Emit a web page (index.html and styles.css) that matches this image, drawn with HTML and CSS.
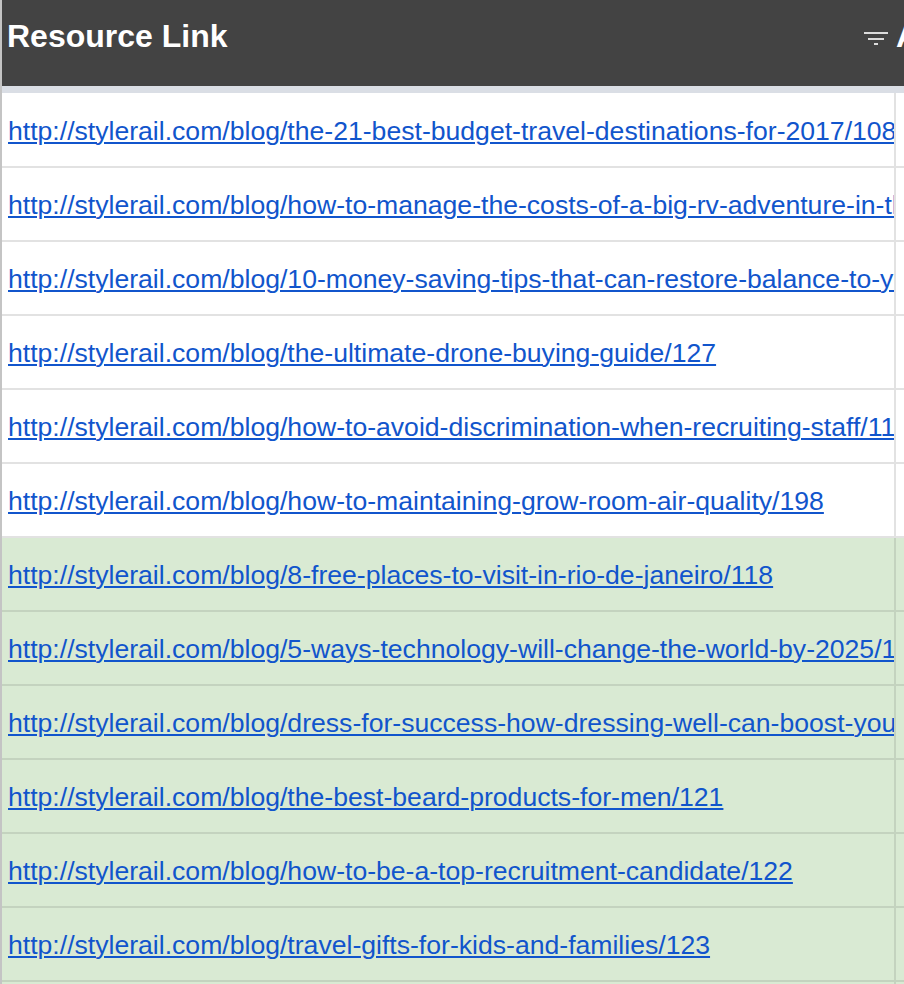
FILE: index.html
```html
<!DOCTYPE html>
<html lang="en">
<head>
  <meta charset="UTF-8">
  <title>Resource Links</title>
  <meta name="viewport" content="width=device-width, initial-scale=1.0">
  <link rel="stylesheet" href="styles.css">
</head>
<body>

  <div class="sheet">
    <div class="head">
      <div class="head-cell first">
        <span class="title">Resource Link</span>
        <svg class="filter" width="24" height="13" viewBox="0 0 24 13">
          <rect x="0" y="0" width="24" height="2" fill="#dcdcdc"/>
          <rect x="4" y="6" width="16" height="2" fill="#dcdcdc"/>
          <rect x="10" y="11" width="4" height="2" fill="#dcdcdc"/>
        </svg>
      </div>
      <div class="head-cell">
        <span class="title">Anchor Text</span>
      </div>
    </div>

    <div class="freeze"></div>

    <div class="row">
      <div class="cell first"><a href="#">http://stylerail.com/blog/the-21-best-budget-travel-destinations-for-2017/108</a></div>
      <div class="cell"></div>
    </div>
    <div class="row">
      <div class="cell first"><a href="#">http://stylerail.com/blog/how-to-manage-the-costs-of-a-big-rv-adventure-in-the-usa/109</a></div>
      <div class="cell"></div>
    </div>
    <div class="row">
      <div class="cell first"><a href="#">http://stylerail.com/blog/10-money-saving-tips-that-can-restore-balance-to-your-finances/110</a></div>
      <div class="cell"></div>
    </div>
    <div class="row">
      <div class="cell first"><a href="#">http://stylerail.com/blog/the-ultimate-drone-buying-guide/127</a></div>
      <div class="cell"></div>
    </div>
    <div class="row">
      <div class="cell first"><a href="#">http://stylerail.com/blog/how-to-avoid-discrimination-when-recruiting-staff/117</a></div>
      <div class="cell"></div>
    </div>
    <div class="row">
      <div class="cell first"><a href="#">http://stylerail.com/blog/how-to-maintaining-grow-room-air-quality/198</a></div>
      <div class="cell"></div>
    </div>
    <div class="row green">
      <div class="cell first"><a href="#">http://stylerail.com/blog/8-free-places-to-visit-in-rio-de-janeiro/118</a></div>
      <div class="cell"></div>
    </div>
    <div class="row green">
      <div class="cell first"><a href="#">http://stylerail.com/blog/5-ways-technology-will-change-the-world-by-2025/119</a></div>
      <div class="cell"></div>
    </div>
    <div class="row green">
      <div class="cell first"><a href="#">http://stylerail.com/blog/dress-for-success-how-dressing-well-can-boost-your-career/120</a></div>
      <div class="cell"></div>
    </div>
    <div class="row green">
      <div class="cell first"><a href="#">http://stylerail.com/blog/the-best-beard-products-for-men/121</a></div>
      <div class="cell"></div>
    </div>
    <div class="row green">
      <div class="cell first"><a href="#">http://stylerail.com/blog/how-to-be-a-top-recruitment-candidate/122</a></div>
      <div class="cell"></div>
    </div>
    <div class="row green">
      <div class="cell first"><a href="#">http://stylerail.com/blog/travel-gifts-for-kids-and-families/123</a></div>
      <div class="cell"></div>
    </div>
    <div class="row green">
      <div class="cell first"><a href="#">http://stylerail.com/blog/how-to-plan-a-weekend-getaway/124</a></div>
      <div class="cell"></div>
    </div>
  </div>

</body>
</html>
```

FILE: styles.css
```css
html, body {
  margin: 0;
  padding: 0;
  overflow: hidden;
}

body {
  font-family: 'Liberation Sans', Arial, sans-serif;
  background: #fff;
  width: 904px;
  height: 984px;
}

.sheet {
  border-left: 2px solid #c4c4c4;
  width: 1100px;
}

.head {
  display: flex;
  height: 86px;
  background: #434343;
}

.head-cell {
  display: flex;
  align-items: flex-start;
  padding-top: 18px;
  box-sizing: border-box;
  flex: 1;
}

.head-cell.first {
  flex: 0 0 894px;
  padding-left: 5px;
  padding-right: 8px;
}

.title {
  color: #fff;
  font-size: 32px;
  font-weight: 700;
  white-space: nowrap;
}

.filter {
  margin-left: auto;
  margin-top: 14px;
}

.freeze {
  height: 7px;
  background: #dadee5;
}

.row {
  display: flex;
  height: 72px;
  border-bottom: 2px solid #e2e2e2;
}

.row:nth-child(3) {
  height: 73px;
}

.cell {
  display: flex;
  align-items: center;
  flex: 1;
  padding-top: 3px;
  box-sizing: border-box;
  overflow: hidden;
  white-space: nowrap;
}

.cell.first {
  flex: 0 0 894px;
  padding-left: 6px;
  border-right: 2px solid #e2e2e2;
}

.cell a {
  color: #1155cc;
  font-size: 26.6px;
  text-decoration: underline;
  text-decoration-thickness: 2px;
  text-underline-offset: 2px;
}

.row.green {
  background: #d9ead3;
  border-bottom-color: #c4d3bf;
}

.row.green .cell.first {
  border-right-color: #c4d3bf;
}
```
